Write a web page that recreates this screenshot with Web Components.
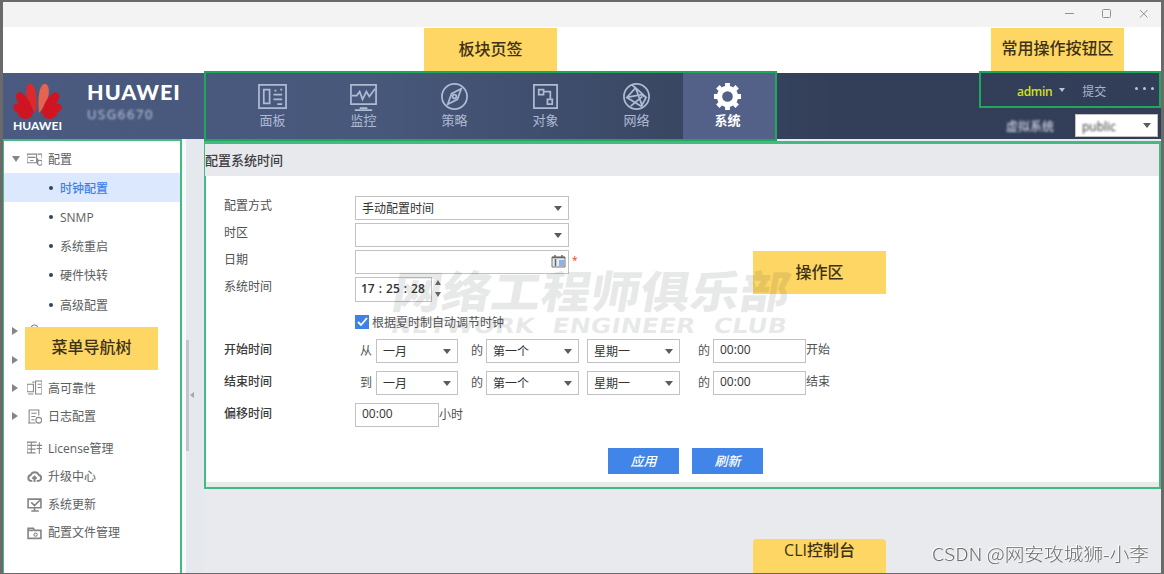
<!DOCTYPE html>
<html lang="zh-CN">
<head>
<meta charset="utf-8">
<title>HUAWEI</title>
<style>
  body {
    margin: 0;
    overflow: hidden;
    font-family: "Open Sans", "Noto Sans CJK SC", sans-serif;
    font-size: 12px;
    color: #505254;
  }
</style>
</head>
<body>
<app-window></app-window>

<script>
const define = (name, html, setup) => {
    const template = document.createElement('template');
    template.innerHTML = html;
    customElements.define(name, class extends HTMLElement {
        static get observedAttributes() {
            return ['name'];
        }

        constructor() {
            super();
            this.attachShadow({ mode: 'open' });
            this.shadowRoot.appendChild(template.content.cloneNode(true));
        }

        connectedCallback() {
            if (setup) {
                setup(this, this.shadowRoot);
            }
        }

        attributeChangedCallback() {
            this.connectedCallback();
        }
    });
};

const icons = {
    panel: '<path d="M1 3h28v24H1z"/><path d="M6 8h6v14H6zM16 13h9M16 18h9M20 23h5M17 9h2M23 8h2"/>',
    monitor: '<path d="M2 3h26v20H2zM11 27h8M6 29h18"/><path d="M3 14h5l3-4 3 8 4-8 3 5 6-8"/>',
    compass: '<circle cx="15" cy="15" r="13"/><path d="M22 7l-4 11-10 5 4-11z"/><circle cx="15" cy="15" r="2"/>',
    object: '<path d="M3 3h24v24H3z"/><path d="M8 8h5v5H8zM17 18h5v5h-5zM13 10h7v8"/>',
    network: '<circle cx="15" cy="15" r="13"/><path d="M14 6L5 16l15 9 5-9zM14 6l-4-3M5 16l15-3 5 3M14 6l11 10M9 25l12-10M14 6l7 19"/>',
    gear: '<g fill="currentColor" stroke="none"><path fill-rule="evenodd" d="M15 4a11 11 0 1 0 0 22 11 11 0 0 0 0-22zM15 9.500a5.500 5.500 0 1 1 0 11 5.500 5.500 0 0 1 0-11z"/></g><path stroke-width="5" d="M15 1v4M15 25v4M1 15h4M25 15h4M5 5l2.500 2.500M22.500 22.500L25 25M5 25l2.500-2.500M22.500 7.500L25 5"/>',
    settings: '<path d="M0 2h9v8H0zM1 5h7M3 8h3M10 2h4v4M10 6v5"/><circle cx="12" cy="10" r="2.300"/>',
    object2: '<circle cx="7" cy="4" r="3"/><path d="M1 13q6-10 12 0z"/>',
    ha: '<path d="M0 4h6v7H0zM8 1h6v12H8zM1 13h5M10 4h3M10 7h3M5 2h2"/>',
    log: '<path d="M11 6V1H2v12h6M4 4h5M4 7h4M4 10h3M1 13h6"/><circle cx="11" cy="10.500" r="2.700"/>',
    license: '<path d="M9 2H0v10h8M1 5h8M1 8.500h7M4 2v10M9 5h5M11.500 2v11M9 8h5"/>',
    cloud: '<path stroke-width="1.800" d="M5 12H3.500a2.800 2.800 0 0 1 0-5.500 4 4 0 0 1 7.500 0 2.800 2.800 0 0 1 0 5.500H9M7 13V8M5 10l2-2 2 2"/>',
    update: '<path stroke-width="1.500" d="M1 2h12v8H1zM4 13h7M7 10v3M4 5l3 3 5-5"/>',
    folder: '<path stroke-width="1.500" d="M1 12.500V3h5l1 2h6v7.500zM1 5h5"/><circle cx="8" cy="9" r="1.500"/>',
};

define('ui-icon', `
<style>
  :host { display: block; flex: none; }
  svg { display: block; width: 100%; height: 100%; fill: none; stroke: currentColor; }
</style>
<svg></svg>`, (host, root) => {
    const svg = root.querySelector('svg');
    const size = host.getAttribute('box') || 14;
    svg.setAttribute('viewBox', `0 0 ${size} ${size}`);
    svg.setAttribute('stroke-width', size > 14 ? 1.8 : 1);
    svg.innerHTML = icons[host.getAttribute('name')] || '';
});

define('title-bar', `
<style>
  :host { display: flex; justify-content: flex-end; align-items: center; gap: 26px;
          height: 25px; padding: 0 12px 2px 0; background: #f3f3f3; box-sizing: border-box; }
  svg { width: 11px; height: 11px; fill: none; stroke: #929292; }
</style>
<svg viewBox="0 0 11 11"><path d="M1 5.500h9"/></svg>
<svg viewBox="0 0 11 11"><rect x="1.500" y="1.500" width="8" height="8" rx="1"/></svg>
<svg viewBox="0 0 11 11"><path d="M2 2l7.500 7.500M9.500 2L2 9.500"/></svg>`);

define('brand-logo', `
<style>
  :host { display: flex; width: 224px; box-sizing: border-box; padding-left: 8px; }
  .mark { width: 54px; height: 62px; flex: none; }
  .mark text { font: bold 10.500px Lato, sans-serif; fill: #fff; }
  .name { margin-left: 22px; padding-top: 8px; color: #fff; font: 700 21.500px/23px Lato, sans-serif; }
  .name b { display: block; letter-spacing: 1px; }
  .model { font: 13px/21px "Open Sans", sans-serif; letter-spacing: 1.600px; color: #c8d0e2; filter: blur(.8px); }
</style>
<svg class="mark" viewBox="0 0 54 62">
  <g fill="#d01422">
    <path transform="translate(25.800 43) rotate(-13)" d="M0-3C-6-13-7-25-3-31q3-4 6 0C6-25 3-13 0-3z" fill="#dc2a2c"/>
    <path transform="translate(27.200 43) rotate(13)" d="M0-3C-3-13-6-25-3-31q3-4 6 0C7-25 6-13 0-3z" fill="#e4654f"/>
    <path transform="translate(25 43.500) rotate(-38)" d="M0-3C-5-11-7-21-4-28q4-4 7 0C6-21 3-11 0-3z"/>
    <path transform="translate(28 43.500) rotate(38)" d="M0-3C-3-11-6-21-3-28q3-4 7 0C7-21 5-11 0-3z"/>
    <path transform="translate(24 43.500) rotate(-62)" d="M0-3C-4-9-6-16-4-22q4-4 7 0C5-16 3-9 0-3z"/>
    <path transform="translate(29 43.500) rotate(62)" d="M0-3C-3-9-5-16-3-22q3-4 7 0C6-16 4-9 0-3z"/>
    <path d="M21.500 43C15 48 9 46 6.500 41c5-1.500 10-.500 15 2z"/>
    <path d="M31.500 43c6.500 5 12.500 3 15-2-5-1.500-10-.500-15 2z"/>
  </g>
  <text x="2" y="56.500" textLength="49" lengthAdjust="spacingAndGlyphs">HUAWEI</text>
</svg>
<div class="name"><b>HUAWEI</b><div class="model">USG6670</div></div>`);

define('nav-tab', `
<style>
  :host { display: flex; flex-direction: column; align-items: center; width: 91px;
          padding-top: 9px; box-sizing: border-box; color: #afbad3; font-size: 13px; line-height: 17px; }
  :host([selected]) { background: #536087; color: #fff; font-weight: bold; width: 92px; padding-right: 3px; margin-left: 1px; }
  ui-icon { width: 29px; height: 29px; margin-bottom: 1px; }
</style>
<ui-icon box="30"></ui-icon><slot></slot>`, (host, root) => {
    root.querySelector('ui-icon').setAttribute('name', host.getAttribute('icon'));
});

define('user-bar', `
<style>
  :host { display: block; width: 181px; }
  .actions { display: flex; align-items: center; height: 34px; padding: 2px 7px 0 37px; box-sizing: border-box; color: #a9b5cb; }
  .admin { color: #d5e024; font-weight: 600; letter-spacing: -.3px; }
  i { border: 3.500px solid transparent; border-top: 4px solid #b9c3d5; border-bottom: 0; margin: 0 17px 2px 7px; }
  .more { margin-left: auto; padding-bottom: 5px; display: flex; gap: 5px; }
  .more span { width: 3px; height: 3px; background: #b9c3d5; border-radius: 50%; }
  .system { display: flex; align-items: center; justify-content: flex-end; gap: 21px; height: 32px; padding: 5px 3px 0 0; box-sizing: border-box; color: #c5cbd9; }
  .system > span { filter: blur(.8px); font-weight: 500; }
  select-box { width: 83px; height: 23px; }
</style>
<div class="actions"><span class="admin">admin</span><i></i>提交<div class="more"><span></span><span></span><span></span></div></div>
<div class="system"><span>虚拟系统</span><select-box soft>public</select-box></div>`);

define('select-box', `
<style>
  :host { display: flex; align-items: center; box-sizing: border-box; height: 24px; padding: 0 6px;
          border: 1px solid #c2c2c2; background: #fff; color: #333; white-space: nowrap; }
  :host([soft]) span { filter: blur(.8px); }
  :host(:not([plain])) span { padding-top: 2px; }
  i { margin-left: auto; border: 4px solid transparent; border-top: 5px solid #5b5b5b; border-bottom: 0; }
  :host([plain]) i { display: none; }
  :host([plain]) span { padding-bottom: 2px; }
</style>
<span><slot></slot></span><i></i>`);

define('tree-item', `
<style>
  :host { display: flex; align-items: center; height: 28.300px; white-space: nowrap; color: #5c5e60; }
  :host([leaf]) { height: 29.200px; }
  :host([selected]) { background: #dbe8fd; color: #3d80e8; font-weight: 500; }
  .arrow { width: 23px; display: flex; padding-left: 8px; box-sizing: border-box; }
  .arrow::before { content: ''; border: 4px solid transparent; border-left: 6px solid #868686; border-right: 0; }
  :host([open]) .arrow::before { border: 4.500px solid transparent; border-top: 6px solid #868686; border-bottom: 0; }
  :host([flat]) .arrow::before { display: none; }
  ui-icon { width: 15px; height: 15px; margin-right: 6px; color: #858585; }
  .dot { display: none; width: 4px; height: 4px; margin: 0 7px 0 45px; border-radius: 50%; background: #345; }
  :host([leaf]) .dot { display: block; }
  :host([leaf]) .arrow, :host([leaf]) ui-icon { display: none; }
</style>
<span class="arrow"></span><span class="dot"></span><ui-icon></ui-icon><slot></slot>`, (host, root) => {
    root.querySelector('ui-icon').setAttribute('name', host.getAttribute('icon') || '');
});

define('nav-tree', `
<style>
  :host { display: block; width: 179px; height: 434px; box-sizing: border-box; background: #fff;
          border: solid #45b982; border-width: 2px 2px 0 1px; padding-top: 4px; }
  .sub { margin-bottom: -2px; }
  .tail { margin-top: 3px; }
</style>
<tree-item open icon="settings">配置</tree-item>
<div class="sub">
  <tree-item leaf selected>时钟配置</tree-item>
  <tree-item leaf>SNMP</tree-item>
  <tree-item leaf>系统重启</tree-item>
  <tree-item leaf>硬件快转</tree-item>
  <tree-item leaf>高级配置</tree-item>
</div>
<tree-item icon="object2"></tree-item>
<tree-item></tree-item>
<tree-item icon="ha">高可靠性</tree-item>
<tree-item icon="log">日志配置</tree-item>
<div class="tail">
  <tree-item flat icon="license">License管理</tree-item>
  <tree-item flat icon="cloud">升级中心</tree-item>
  <tree-item flat icon="update">系统更新</tree-item>
  <tree-item flat icon="folder">配置文件管理</tree-item>
</div>`);

define('splitter-bar', `
<style>
  :host { display: flex; width: 22px; box-sizing: border-box; border-left: 4px solid #f8f9fb; background: #e5e8ec; }
  .thumb { width: 3px; height: 111px; margin-top: 201px; background: #c4c6ce; }
  i { align-self: flex-start; margin: 253px 0 0 1px; border: 3px solid transparent; border-right: 4px solid #a5a7ad; border-left: 0; }
</style>
<div class="thumb"></div><i></i>`);

define('form-row', `
<style>
  :host { display: flex; height: 27px; }
  .label { width: 131px; flex: none; line-height: 20px; }
  :host([strong]) .label { font-weight: 500; color: #3b3b3b; line-height: 21px; }
  .field { display: flex; align-items: flex-start; line-height: 24px; }
</style>
<div class="label"></div><div class="field"><slot></slot></div>`, (host, root) => {
    root.querySelector('.label').textContent = host.getAttribute('label') || '';
});

define('week-rule', `
<style>
  :host { display: flex; line-height: 24px; }
  .from { width: 21px; padding-left: 5px; box-sizing: border-box; }
  .month { width: 82px; }
  .day { width: 93px; }
  .of { width: 15px; padding-left: 13px; }
  .day + .day { margin-left: 8px; }
  .at { width: 15px; padding-left: 18px; }
  .end { line-height: 22px; }
</style>
<span class="from"></span>
<select-box class="month">一月</select-box>
<span class="of">的</span>
<select-box class="day">第一个</select-box>
<select-box class="day">星期一</select-box>
<span class="at">的</span>
<select-box plain class="day">00:00</select-box>
<span class="end"><slot></slot></span>`, (host, root) => {
    root.querySelector('.from').textContent = host.getAttribute('from');
});

define('push-button', `
<style>
  :host { display: block; width: 71px; height: 26px; line-height: 26px; text-align: center;
          background: #4285e8; color: #fff; font-size: 13px; font-style: italic; font-weight: 500; }
</style>
<slot></slot>`);

define('time-panel', `
<style>
  :host { display: block; height: 348px; box-sizing: border-box; border: 2px solid #45b982; border-top-width: 3px;
          background: #fff; }
  .title { height: 32px; line-height: 32px; margin-left: -1px; background: #e8e9ed; color: #3f4042; font-size: 13px; font-weight: 500; }
  .body { height: 306px; padding: 20px 0 0 18px; box-sizing: border-box; }
  .foot { height: 5px; background: #e6eae9; }
  .wide { width: 214px; }
  .time { width: 77px; height: 25px; padding: 0 5px; font-weight: 600; word-spacing: .900px; }
  .date { position: relative; }
  .calendar { position: absolute; right: 3px; top: 5px; width: 15px; height: 13px; }
  .star { color: #e0401c; margin-left: 3px; line-height: 21px; font-size: 10px; }
  .spin { display: flex; flex-direction: column; gap: 7px; margin: 3px 0 0 3px; }
  .spin i { border: 3.500px solid transparent; border-bottom: 5px solid #666; border-top: 0; }
  .spin i + i { border-bottom: 0; border-top: 5px solid #666; }
  .check { width: 14px; height: 14px; margin: 3px 3px 0 0; }
  .daylight { line-height: 22px; }
  .clock { height: 35px; }
  .buttons { display: flex; gap: 13px; margin: 13px 0 0 384px; }
</style>
<div class="title">配置系统时间</div>
<div class="body">
  <form-row label="配置方式"><select-box class="wide">手动配置时间</select-box></form-row>
  <form-row label="时区"><select-box class="wide"></select-box></form-row>
  <form-row label="日期">
    <div class="date">
      <select-box plain class="wide"></select-box>
      <svg class="calendar" viewBox="0 0 15 13"><path d="M1 2h13v10H1z" fill="#e6eaf2" stroke="#777"/><path d="M1 2.500h13M4 0v3M11 0v3M4.500 4v7" stroke="#666" stroke-width="1.500"/><path d="M8 5h5v6H8z" fill="#8fb1e8"/></svg>
    </div>
    <span class="star">*</span>
  </form-row>
  <form-row class="clock" label="系统时间">
    <select-box plain class="time">17 : 25 : 28</select-box>
    <div class="spin"><i></i><i></i></div>
  </form-row>
  <form-row>
    <svg class="check" viewBox="0 0 14 14"><path d="M0 0h14v14H0z" fill="#3e82e5"/><path d="M3 7l3 3 6-7" fill="none" stroke="#fff" stroke-width="1.800"/></svg>
    <span class="daylight">根据夏时制自动调节时钟</span>
  </form-row>
  <form-row strong label="开始时间" style="height: 32px"><week-rule from="从">开始</week-rule></form-row>
  <form-row strong label="结束时间" style="height: 32px"><week-rule from="到">结束</week-rule></form-row>
  <form-row strong label="偏移时间" style="height: 32px"><select-box plain style="width: 84px">00:00</select-box>小时</form-row>
  <div class="buttons"><push-button>应用</push-button><push-button>刷新</push-button></div>
</div>
<div class="foot"></div>`);

define('area-callout', `
<style>
  :host { display: flex; align-items: center; justify-content: center; position: absolute; z-index: 2;
          width: 133px; height: 43px; padding-bottom: 3px; box-sizing: border-box;
          background: #fdd663; color: #3d3218; font-size: 16px; font-weight: 500; }
</style>
<slot></slot>`);

define('area-outline', `
<style>
  :host { display: block; position: absolute; z-index: 1; box-sizing: border-box; border: 2px solid #20a75c; }
</style>`);

define('club-watermark', `
<style>
  :host { display: block; position: absolute; z-index: 3; left: 385px; top: 252px; width: 430px; height: 98px; }
  text { fill: rgba(70, 72, 76, .12); font-weight: 900; }
  .cn { font-family: "Noto Sans CJK SC", sans-serif; font-size: 44px; }
  .en { font-family: "DejaVu Sans", sans-serif; font-size: 21px; font-weight: bold; word-spacing: 8px; }
</style>
<svg width="430" height="98">
  <g transform="translate(13 0) skewX(-10)">
    <text class="cn" x="2" y="56" textLength="397" lengthAdjust="spacingAndGlyphs">网络工程师俱乐部</text>
    <text class="en" x="6" y="81" textLength="396" lengthAdjust="spacingAndGlyphs">NETWORK ENGINEER CLUB</text>
  </g>
</svg>`);

define('author-mark', `
<style>
  :host { display: block; position: absolute; z-index: 3; left: 930px; top: 540px; width: 224px; height: 32px; }
  svg { filter: drop-shadow(-1px -1px 0 #fff); }
  text { font: 300 18px "Noto Sans CJK SC", sans-serif; }
</style>
<svg width="224" height="32">
  <text x="2" y="21" fill="#6d6d6d" textLength="217" lengthAdjust="spacingAndGlyphs">CSDN @网安攻城狮-小李</text>
</svg>`);

define('app-window', `
<style>
  :host { display: block; position: relative; width: 1164px; height: 574px; box-sizing: border-box; overflow: hidden;
          border: solid #6a6a6a; border-width: 2px 3px 1px; background: #fff; }
  header { display: flex; height: 66px; margin-top: 46px;
           background: linear-gradient(90deg, #4a5a80 0, #48587b 32%, #394763 58%, #333f59 72%, #323d57); }
  user-bar { margin-left: auto; }
  main { display: flex; height: 434px; background: #e8eaed; }
  .content { flex: 1; padding-top: 2px; }
  .overlay { position: absolute; left: -3px; top: -2px; width: 1164px; height: 574px; }
</style>
<title-bar></title-bar>
<header>
  <brand-logo></brand-logo>
  <nav-tab icon="panel">面板</nav-tab>
  <nav-tab icon="monitor">监控</nav-tab>
  <nav-tab icon="compass">策略</nav-tab>
  <nav-tab icon="object">对象</nav-tab>
  <nav-tab icon="network">网络</nav-tab>
  <nav-tab icon="gear" selected>系统</nav-tab>
  <user-bar></user-bar>
</header>
<main>
  <nav-tree></nav-tree>
  <splitter-bar></splitter-bar>
  <div class="content"><time-panel></time-panel></div>
</main>
<div class="overlay">
  <area-outline style="left: 204px; top: 71px; width: 573px; height: 70px"></area-outline>
  <area-outline style="left: 979px; top: 71px; width: 182px; height: 37px"></area-outline>
  <area-callout style="left: 424px; top: 28px">板块页签</area-callout>
  <area-callout style="left: 991px; top: 28px; padding-bottom: 5px">常用操作按钮区</area-callout>
  <area-callout style="left: 25px; top: 327px; padding-bottom: 5px">菜单导航树</area-callout>
  <area-callout style="left: 753px; top: 251px; padding-bottom: 4px">操作区</area-callout>
  <area-callout style="left: 753px; top: 539px; height: 34px; padding-bottom: 14px; border-radius: 4px 4px 0 0">CLI控制台</area-callout>
  <club-watermark></club-watermark>
  <author-mark></author-mark>
</div>`);
</script>
</body>
</html>
